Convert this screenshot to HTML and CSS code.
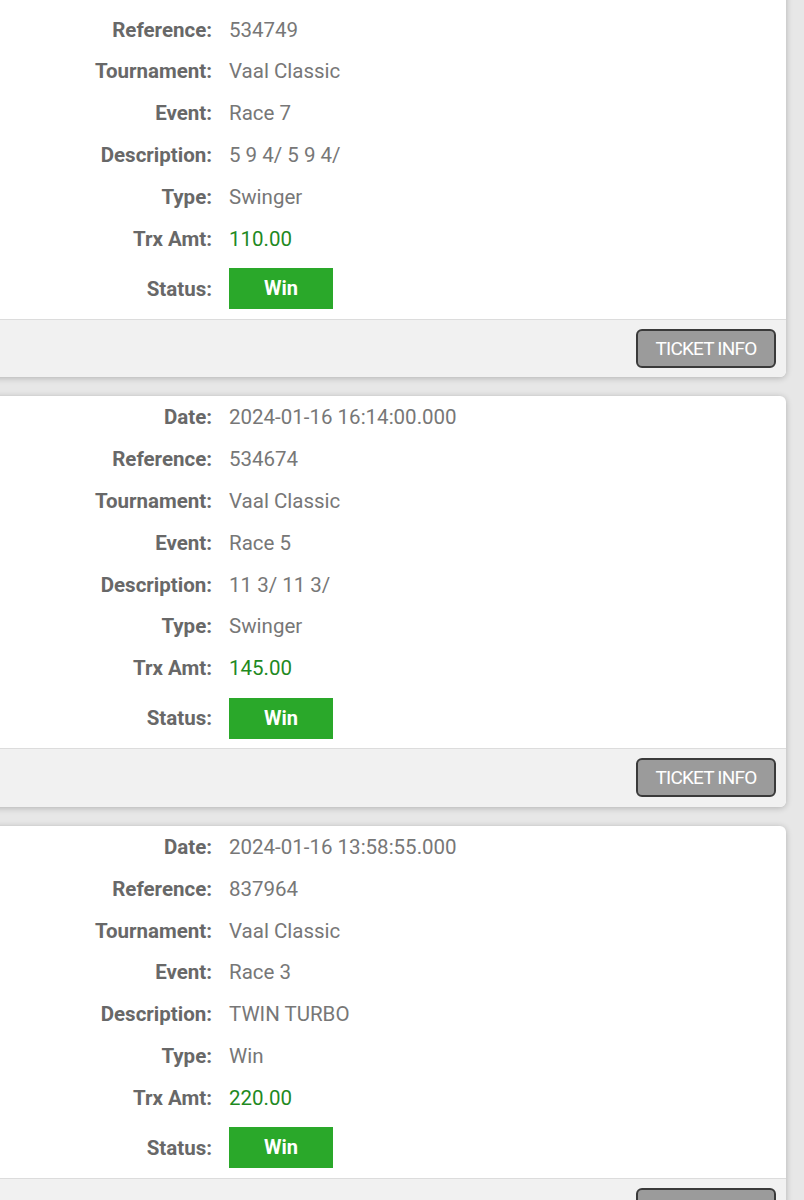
FILE: index.html
```html
<!DOCTYPE html>
<html lang="en">
<head>
    <meta charset="UTF-8">
    <meta name="viewport" content="width=device-width, initial-scale=1.0">
    <title>Transactions</title>
    <link rel="stylesheet" href="styles.css">
</head>
<body>
    <div class="ticket-list">
        <div class="ticket">
            <div class="row"><span class="label">Date:</span><span class="value">2024-01-16 16:40:00.000</span></div>
            <div class="row"><span class="label">Reference:</span><span class="value">534749</span></div>
            <div class="row"><span class="label">Tournament:</span><span class="value">Vaal Classic</span></div>
            <div class="row"><span class="label">Event:</span><span class="value">Race 7</span></div>
            <div class="row"><span class="label">Description:</span><span class="value">5 9 4/ 5 9 4/</span></div>
            <div class="row"><span class="label">Type:</span><span class="value">Swinger</span></div>
            <div class="row"><span class="label">Trx Amt:</span><span class="value amount">110.00</span></div>
            <div class="row status-row"><span class="label">Status:</span><span class="badge">Win</span></div>
            <div class="ticket-footer"><button type="button" class="info-btn">TICKET INFO</button></div>
        </div>

        <div class="ticket">
            <div class="row"><span class="label">Date:</span><span class="value">2024-01-16 16:14:00.000</span></div>
            <div class="row"><span class="label">Reference:</span><span class="value">534674</span></div>
            <div class="row"><span class="label">Tournament:</span><span class="value">Vaal Classic</span></div>
            <div class="row"><span class="label">Event:</span><span class="value">Race 5</span></div>
            <div class="row"><span class="label">Description:</span><span class="value">11 3/ 11 3/</span></div>
            <div class="row"><span class="label">Type:</span><span class="value">Swinger</span></div>
            <div class="row"><span class="label">Trx Amt:</span><span class="value amount">145.00</span></div>
            <div class="row status-row"><span class="label">Status:</span><span class="badge">Win</span></div>
            <div class="ticket-footer"><button type="button" class="info-btn">TICKET INFO</button></div>
        </div>

        <div class="ticket">
            <div class="row"><span class="label">Date:</span><span class="value">2024-01-16 13:58:55.000</span></div>
            <div class="row"><span class="label">Reference:</span><span class="value">837964</span></div>
            <div class="row"><span class="label">Tournament:</span><span class="value">Vaal Classic</span></div>
            <div class="row"><span class="label">Event:</span><span class="value">Race 3</span></div>
            <div class="row"><span class="label">Description:</span><span class="value">TWIN TURBO</span></div>
            <div class="row"><span class="label">Type:</span><span class="value">Win</span></div>
            <div class="row"><span class="label">Trx Amt:</span><span class="value amount">220.00</span></div>
            <div class="row status-row"><span class="label">Status:</span><span class="badge">Win</span></div>
            <div class="ticket-footer"><button type="button" class="info-btn">TICKET INFO</button></div>
        </div>
    </div>
</body>
</html>
```

FILE: styles.css
```css
body {
    margin: 0;
    background-color: #e7e7e7;
    font-family: Roboto, "Liberation Sans", sans-serif;
    font-size: 20.5px;
}
.ticket-list {
    display: flex;
    flex-direction: column;
    gap: 19px;
    margin-top: -33.5px;
}
.ticket {
    margin-left: -12px;
    margin-right: 18px;
    background: #fff;
    border-radius: 6px;
    overflow: hidden;
    box-shadow: 0 1px 6px rgba(0, 0, 0, 0.24);
}
.row {
    display: grid;
    grid-template-columns: 224px 1fr;
    column-gap: 17px;
    align-items: center;
    height: 41.8px;
    padding-top: 1px;
    box-sizing: border-box;
}
.label {
    text-align: right;
    font-weight: bold;
    color: #686868;
}
.value {
    color: #777;
}
.amount {
    color: #1f8a1f;
}
.status-row {
    height: 59.5px;
    padding-top: 0;
}
.badge {
    width: 104px;
    height: 41px;
    line-height: 41px;
    text-align: center;
    background-color: #2aa82a;
    color: #fff;
    font-weight: bold;
    font-size: 20px;
}
.ticket-footer {
    display: flex;
    justify-content: flex-end;
    align-items: flex-start;
    height: 58.5px;
    padding: 9px 10px 0 0;
    box-sizing: border-box;
    background-color: #f1f1f1;
    border-top: 1px solid #dcdcdc;
}
.info-btn {
    width: 140px;
    height: 39px;
    border: 2px solid #3a3a3a;
    border-radius: 6px;
    background-color: #9b9b9b;
    color: #fff;
    font-family: Roboto, "Liberation Sans", sans-serif;
    font-size: 19px;
    letter-spacing: -0.8px;
    padding: 0;
}
```
